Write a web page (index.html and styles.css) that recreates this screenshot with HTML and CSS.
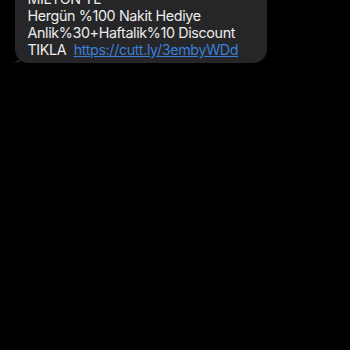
FILE: index.html
```html
<!DOCTYPE html>
<html>
<head>
<meta charset="utf-8">
<link rel="stylesheet" href="styles.css">
</head>
<body>
<div class="thread">
  <div class="bubble">
    <p class="line">MİLYON TL</p>
    <p class="line">Hergün %100 Nakit Hediye</p>
    <p class="line">Anlik%30+Haftalik%10 Discount</p>
    <p class="line">TIKLA&nbsp; <a class="link" href="#">https://cutt.ly/3embyWDd</a></p>
    <svg class="tail" width="14" height="12" viewBox="0 0 14 12"><path d="M10 0 L10 4 C10 8 6 11 0 12 C5 12 9 11 13 8 L14 0 Z" fill="#262628"/></svg>
  </div>
</div>
</body>
</html>
```
FILE: styles.css
```css
html, body {
  margin: 0;
  padding: 0;
  background: #000;
  height: 100%;
}
.thread {
  display: flex;
  flex-direction: column;
  align-items: flex-start;
  padding-left: 15px;
}
.bubble {
  position: relative;
  margin-top: -19px;
  width: 252px;
  box-sizing: border-box;
  padding: 9px 10px 5px 12.5px;
  background: #262628;
  border-radius: 14px;
  font-family: Inter, "Liberation Sans", sans-serif;
  font-size: 14.3px;
  letter-spacing: -0.36px;
  line-height: 17px;
  color: #ececec;
}
.line {
  margin: 0;
  white-space: nowrap;
}
.link {
  color: #3a7fd9;
  text-decoration: underline;
}
.tail {
  position: absolute;
  left: -4px;
  bottom: 0;
}
```
